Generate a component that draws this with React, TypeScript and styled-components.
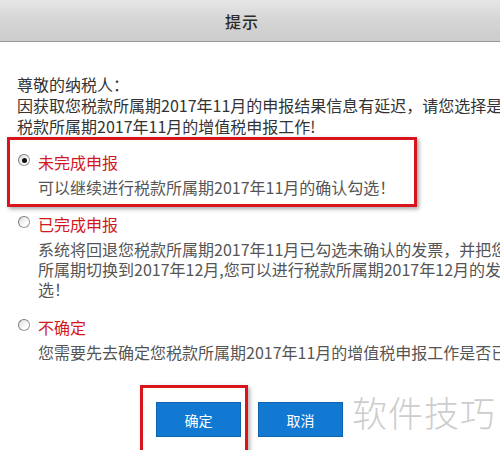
import React from "react";
import styled, { createGlobalStyle } from "styled-components";

const GlobalStyle = createGlobalStyle`
  html, body {
    margin: 0;
    padding: 0;
    background: #ffffff;
  }
  body {
    font-family: "Noto Sans CJK SC", "Noto Sans", sans-serif;
  }
`;

const Page = styled.div`
  position: relative;
  width: 500px;
  height: 450px;
  overflow: hidden;
  background: #ffffff;
  color: #333333;
`;

const Header = styled.div`
  height: 41px;
  border-bottom: 1px solid #9a9a9a;
  background: linear-gradient(#e6e6e6 0%, #d6d6d6 45%, #cccccc 100%);
  display: flex;
  align-items: center;
  justify-content: center;
`;

const Title = styled.h2`
  margin: 0 0 0 -16px;
  font-size: 16px;
  font-weight: 500;
  color: #2b2b2b;
  letter-spacing: 1px;
`;

const Body = styled.div`
  padding-top: 32px;
  white-space: nowrap;
`;

const Intro = styled.p`
  margin: 0;
  padding-left: 17px;
  font-size: 16px;
  line-height: 21px;
  color: #333333;
`;

const OptionBox = styled.div<{ $marked?: boolean }>`
  box-sizing: border-box;
  ${(p) =>
    p.$marked
      ? `
    width: 410px;
    margin-left: 7px;
    border: 3px solid #d8151c;
    box-shadow: 2px 2px 4px rgba(0, 0, 0, 0.35);
    padding: 12px 0 7px 8px;
  `
      : `
    padding: 7px 0 11px 18px;
  `}
`;

const OptionHead = styled.label`
  display: flex;
  align-items: center;
  gap: 8px;
  height: 20px;
`;

const Radio = styled.span<{ $checked?: boolean }>`
  position: relative;
  top: -2px;
  box-sizing: border-box;
  width: 12px;
  height: 12px;
  border-radius: 50%;
  border: 1px solid #9c9c9c;
  border-left-color: #7d7d7d;
  border-top-color: #7d7d7d;
  background: linear-gradient(135deg, #dcdcdc, #ffffff 70%);
  display: flex;
  align-items: center;
  justify-content: center;
  &::after {
    content: "";
    display: ${(p) => (p.$checked ? "block" : "none")};
    width: 5px;
    height: 5px;
    border-radius: 50%;
    background: #111111;
  }
`;

const OptionName = styled.span`
  font-size: 16px;
  line-height: 20px;
  color: #d2191f;
`;

const OptionText = styled.p`
  margin: 5px 0 0 20px;
  font-size: 16px;
  line-height: 20px;
  color: #555555;
`;

const Actions = styled.div`
  margin-top: 12px;
  padding-left: 140px;
  display: flex;
  align-items: flex-start;
  gap: 10px;
`;

const Marker = styled.div`
  border: 3px solid #d8151c;
  box-shadow: 2px 2px 4px rgba(0, 0, 0, 0.3);
  padding: 14px 4px 14px 13px;
`;

const Button = styled.button<{ $offset?: boolean }>`
  width: 85px;
  height: 35px;
  margin-top: ${(p) => (p.$offset ? "17px" : "0")};
  border: 1px solid #0d63ad;
  background: #1279d2;
  color: #ffffff;
  font-family: "Noto Sans CJK SC", "Noto Sans", sans-serif;
  font-size: 14px;
  cursor: pointer;
  padding: 0;
`;

const Watermark = styled.div`
  position: absolute;
  left: 352px;
  top: 394px;
  font-size: 35px;
  line-height: 1;
  font-weight: 300;
  color: #cdcdcd;
  letter-spacing: 1px;
`;

type Option = {
  name: string;
  lines: string[];
  checked?: boolean;
  marked?: boolean;
};

const options: Option[] = [
  {
    name: "未完成申报",
    lines: ["可以继续进行税款所属期2017年11月的确认勾选！"],
    checked: true,
    marked: true,
  },
  {
    name: "已完成申报",
    lines: [
      "系统将回退您税款所属期2017年11月已勾选未确认的发票，并把您税款",
      "所属期切换到2017年12月,您可以进行税款所属期2017年12月的发票勾",
      "选！",
    ],
  },
  {
    name: "不确定",
    lines: ["您需要先去确定您税款所属期2017年11月的增值税申报工作是否已完成"],
  },
];

export default function App() {
  return (
    <Page>
      <GlobalStyle />
      <Header>
        <Title>提示</Title>
      </Header>
      <Body>
        <Intro>
          尊敬的纳税人：
          <br />
          因获取您税款所属期2017年11月的申报结果信息有延迟，请您选择是否已完成
          <br />
          税款所属期2017年11月的增值税申报工作!
        </Intro>
        {options.map((o) => (
          <OptionBox key={o.name} $marked={o.marked}>
            <OptionHead>
              <Radio $checked={o.checked} />
              <OptionName>{o.name}</OptionName>
            </OptionHead>
            <OptionText>
              {o.lines.map((l, i) => (
                <React.Fragment key={i}>
                  {i > 0 && <br />}
                  {l}
                </React.Fragment>
              ))}
            </OptionText>
          </OptionBox>
        ))}
        <Actions>
          <Marker>
            <Button>确定</Button>
          </Marker>
          <Button $offset>取消</Button>
        </Actions>
      </Body>
      <Watermark>软件技巧</Watermark>
    </Page>
  );
}
